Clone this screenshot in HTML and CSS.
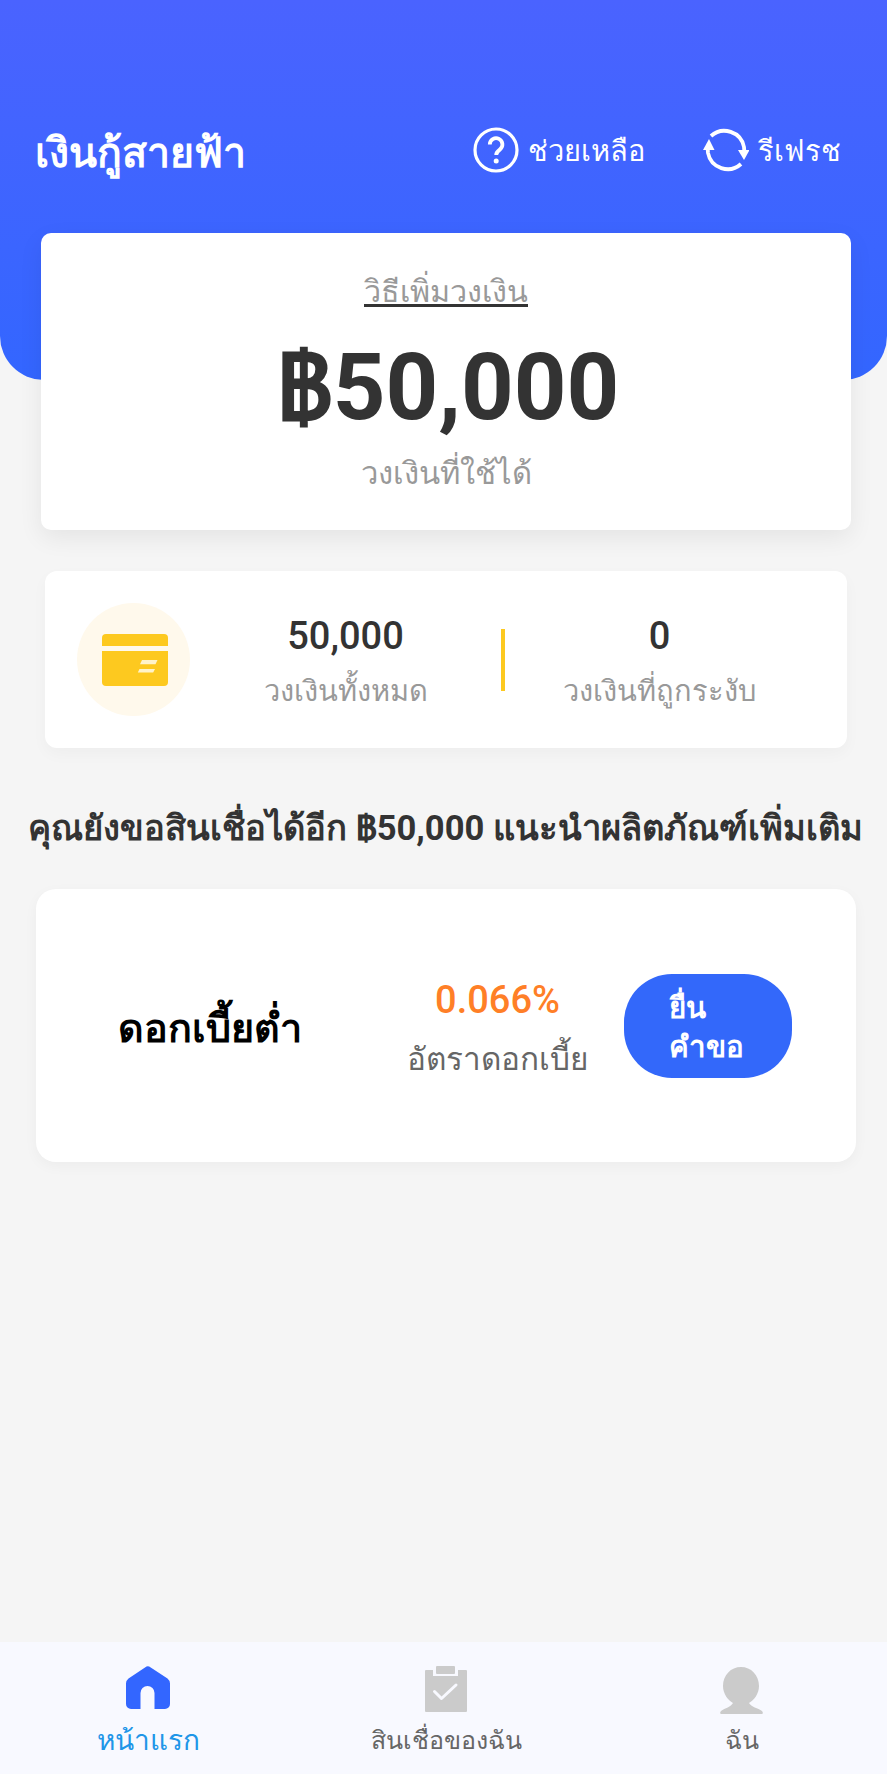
FILE: index.html
```html
<!DOCTYPE html>
<html lang="th">
<head>
<meta charset="utf-8">
<title>เงินกู้สายฟ้า</title>
<link rel="stylesheet" href="styles.css">
</head>
<body>
<div class="app">
  <header class="hero">
    <h1 class="title">เงินกู้สายฟ้า</h1>
    <div class="actions">
      <div class="action help">
        <svg class="ico-help" viewBox="0 0 46 46"><circle cx="23" cy="23" r="21" fill="none" stroke="#fff" stroke-width="3.200"/><path d="M16.800 17.500a6.300 6.300 0 1 1 10 5.100c-2.300 1.700-3.600 2.700-3.600 5.400" fill="none" stroke="#fff" stroke-width="3.800"/><circle cx="23.200" cy="34" r="2.500" fill="#fff"/></svg>
        <span>ช่วยเหลือ</span>
      </div>
      <div class="action refresh">
        <svg class="ico-refresh" viewBox="0 0 46 46"><path d="M8 9A20 20 0 0 1 41 20l.3 4" fill="none" stroke="#fff" stroke-width="3.800"/><path d="M38 37A20 20 0 0 1 5 26l-.3-4" fill="none" stroke="#fff" stroke-width="3.800"/><path d="M35 23h11.500l-5.500 10z" fill="#fff"/><path d="M0 23h11.500L6 12z" fill="#fff"/></svg>
        <span>รีเฟรช</span>
      </div>
    </div>
  </header>

  <section class="limit">
    <a class="limit-link">วิธีเพิ่มวงเงิน</a>
    <div class="limit-amount">฿50,000</div>
    <div class="limit-label">วงเงินที่ใช้ได้</div>
  </section>

  <section class="stats">
    <div class="stats-icon">
      <svg viewBox="0 0 66 52"><path d="M0 12V4a4 4 0 0 1 4-4h58a4 4 0 0 1 4 4v8z" fill="#fdc91f"/><path d="M0 17h66v31a4 4 0 0 1-4 4H4a4 4 0 0 1-4-4z" fill="#fdc91f"/><path d="M40 26h15.500l-2 4.200H38zM37.500 35h15.500l-1.800 3.600H35.800z" fill="#fff3c9"/></svg>
    </div>
    <div class="stat stat-a"><b>50,000</b><span>วงเงินทั้งหมด</span></div>
    <i class="stat-rule"></i>
    <div class="stat stat-b"><b>0</b><span>วงเงินที่ถูกระงับ</span></div>
  </section>

  <h2 class="note">คุณยังขอสินเชื่อได้อีก ฿50,000 แนะนำผลิตภัณฑ์เพิ่มเติม</h2>

  <section class="loan">
    <div class="loan-name">ดอกเบี้ยต่ำ</div>
    <div class="loan-rate"><b>0.066%</b><span>อัตราดอกเบี้ย</span></div>
    <button class="loan-btn">ยื่น<br>คำขอ</button>
  </section>

  <nav class="tabs">
    <div class="tab active">
      <svg class="tab-ico" viewBox="0 0 44 46"><path d="M20.500.6Q21.800-.2 23.200.6L41.500 12.500Q44 14.500 44 17.500V38a5 5 0 0 1-5 5H28.500V27a7 7 0 0 0-14 0V43H5a5 5 0 0 1-5-5V17.500Q0 14.500 2.500 12.500z" fill="#3366ff"/></svg>
      <span>หน้าแรก</span>
    </div>
    <div class="tab">
      <svg class="tab-ico" viewBox="0 -1 42 46"><path d="M1 3h7v6h25V3h8a1 1 0 0 1 1 1v40a1 1 0 0 1-1 1H1a1 1 0 0 1-1-1V4a1 1 0 0 1 1-1z" fill="#cbcbcb"/><rect x="11" y="-1" width="19" height="8" rx="1" fill="#cbcbcb"/><path d="M9.500 24.500l7 7L31 18" fill="none" stroke="#f8f9ff" stroke-width="3" stroke-linecap="round" stroke-linejoin="round"/></svg>
      <span>สินเชื่อของฉัน</span>
    </div>
    <div class="tab">
      <svg class="tab-ico" viewBox="0 -1 44 46"><path d="M21 0C31 0 39 8 39 19 39 27 34 33 29 36 31 40 38 41 42 44Q44 47 41.500 47H1.500Q-1 47 1 44C5 41 11 40 13 36 8 33 3 27 3 19 3 8 11 0 21 0z" fill="#cbcbcb"/></svg>
      <span>ฉัน</span>
    </div>
  </nav>
</div>
</body>
</html>
```
FILE: styles.css
```css
* { box-sizing: border-box; }
html, body { margin: 0; padding: 0; }
body { background: #f5f5f5; font-family: Roboto, "Noto Sans", "Liberation Sans", sans-serif; }
.app { width: 887px; height: 1774px; display: flex; flex-direction: column; align-items: center; position: relative; }
.hero {
  width: 887px; height: 380px; flex: none; padding: 120px 46px 0 35px;
  background: linear-gradient(180deg, #4a63ff 0%, #3366ff 100%);
  border-radius: 0 0 44px 44px;
  display: flex; justify-content: space-between; align-items: flex-start;
}
.title { margin: 0; color: #fff; font-size: 41px; line-height: 66px; font-weight: 700; }
.actions { display: flex; gap: 58px; padding-top: 7px; }
.action { display: flex; align-items: center; gap: 9px; color: #fff; font-size: 29px; line-height: 46px; }
.action span { position: relative; top: 1px; }
.ico-help, .ico-refresh { width: 46px; height: 46px; flex: none; }
.limit {
  width: 810px; height: 297px; margin: -147px 0 0 5px; background: #fff; border-radius: 10px;
  box-shadow: 0 8px 24px rgba(0,0,0,.07); display: flex; flex-direction: column; align-items: center; flex: none;
  padding-top: 37px;
}
.limit-link { color: #999; font-size: 30.500px; line-height: 44px; text-decoration: underline; text-decoration-color: #333; }
.limit-amount { color: #333; font-size: 92px; line-height: 106px; font-weight: 700; margin-top: 21px; padding-left: 4px; }
.limit-label { color: #999; font-size: 31px; line-height: 44px; margin-top: 11px; }
.stats {
  width: 802px; height: 177px; margin: 41px 0 0 4px; background: #fff; border-radius: 12px; flex: none;
  box-shadow: 0 6px 16px rgba(0,0,0,.03); display: flex; align-items: center;
  padding-left: 32px;
}
.stats-icon { width: 113px; height: 113px; border-radius: 50%; background: #fff9ec; display: flex; align-items: center; justify-content: center; flex: none; padding-left: 3px; }
.stats-icon svg { width: 66px; height: 52px; }
.stat { display: flex; flex-direction: column; align-items: center; padding-top: 7px; flex: none; }
.stat b { color: #333; font-size: 38px; line-height: 48px; font-weight: 500; }
.stat span { color: #999; font-size: 29px; line-height: 48px; margin-top: 7px; white-space: nowrap; }
.stat-a { width: 228px; margin-left: 42px; }
.stat-rule { width: 4px; height: 62px; background: #fdc91f; flex: none; margin-left: 41px; }
.stat-b { width: 280px; margin-left: 15px; }
.note { margin: 55px 0 0 4px; color: #333; font-size: 34.600px; line-height: 50px; font-weight: 700; white-space: nowrap; flex: none; }
.loan {
  width: 820px; height: 273px; margin: 36px 0 0 4px; background: #fff; border-radius: 20px; flex: none;
  box-shadow: 0 4px 14px rgba(0,0,0,.04); display: flex; align-items: center; padding-left: 82px;
}
.loan-name { width: 282px; font-size: 39.500px; font-weight: 700; color: #000; line-height: 50px; flex: none; padding-top: 7px; white-space: nowrap; }
.loan-rate { width: 196px; display: flex; flex-direction: column; align-items: center; flex: none; padding-top: 10px; }
.loan-rate b { color: #ff7f27; font-size: 38px; line-height: 46px; font-weight: 500; white-space: nowrap; }
.loan-rate span { color: #666; font-size: 31.500px; line-height: 50px; margin-top: 12px; white-space: nowrap; }
.loan-btn {
  width: 168px; height: 104px; margin-left: 28px; border: 0; border-radius: 48px; background: #3368fa; color: #fff;
  font: 700 29.500px/39px Roboto, "Noto Sans", sans-serif; text-align: left; padding: 5px 45px 0;
  flex: none;
}
.tabs {
  position: absolute; left: 0; bottom: 0; width: 887px; height: 132px; background: #f8f9ff;
  display: grid; grid-template-columns: 296px 300px 291px;
}
.tab { display: flex; flex-direction: column; align-items: center; padding-top: 24px; color: #666; font-size: 25px; line-height: 40px; }
.tab-ico { height: 46px; width: 44px; margin-bottom: 9px; overflow: visible; }
.tab.active { color: #1f96e8; font-size: 28px; }
```
